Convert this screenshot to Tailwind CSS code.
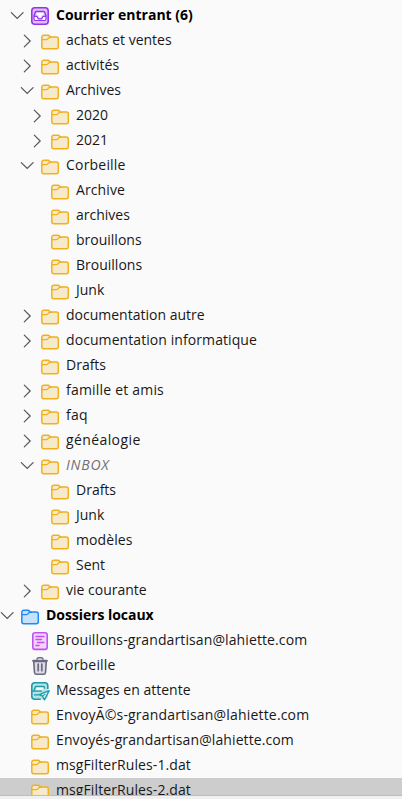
<!DOCTYPE html>
<html lang="fr">
<head>
  <meta charset="UTF-8" />
  <meta name="viewport" content="width=device-width, initial-scale=1" />
  <title>Dossiers</title>
  <script src="https://cdn.jsdelivr.net/npm/@tailwindcss/browser@4"></script>
</head>
<body class="bg-[#fafafa] h-screen overflow-hidden flex flex-col font-['Open_Sans',sans-serif] text-[14px] text-[#18181b]">

  <!-- icon sprite -->
  <svg class="hidden">
    <symbol id="open" viewBox="0 0 14 20"><path d="M1.3 6.6 7.2 12.5 13.1 6.6" fill="none" stroke="#55555c" stroke-width="1.2" stroke-linecap="round" /></symbol>
    <symbol id="closed" viewBox="0 0 14 20"><path d="M4.3 4.1 10.2 10 4.3 15.9" fill="none" stroke="#55555c" stroke-width="1.2" stroke-linecap="round" /></symbol>
    <symbol id="folder" viewBox="0 0 20 20">
      <path d="M1.8 6.2a2 2 0 0 1 2-2h4.1c.8 0 1.3.3 1.6.9l.5 1h6.3a2 2 0 0 1 2 2v7.6a2 2 0 0 1-2 2H3.8a2 2 0 0 1-2-2z" fill="#f7eacb" stroke="#f0b11e" stroke-width="1.5" />
      <path d="M2 8.6h4.6c1.8 0 1.6-2.3 3.4-2.3h2" fill="none" stroke="#f0b11e" stroke-width="1.3" />
    </symbol>
    <symbol id="local" viewBox="0 0 20 20">
      <path d="M1.8 6.2a2 2 0 0 1 2-2h4.1c.8 0 1.3.3 1.6.9l.5 1h6.3a2 2 0 0 1 2 2v7.6a2 2 0 0 1-2 2H3.8a2 2 0 0 1-2-2z" fill="#c5e2fb" stroke="#2288f5" stroke-width="1.5" />
      <path d="M2 8.6h4.6c1.8 0 1.6-2.3 3.4-2.3h2" fill="none" stroke="#2288f5" stroke-width="1.3" />
    </symbol>
    <symbol id="inbox" viewBox="0 0 20 20">
      <rect x="1.8" y="1.8" width="16.4" height="16.4" rx="3" fill="#dcc0fb" stroke="#9333ea" stroke-width="1.6" />
      <path d="M4 10.3h2.7c.9 0 .8 2.6 2 2.6h2.6c1.2 0 1.1-2.6 2-2.6H16v2.8c0 .9-.6 1.4-1.4 1.4H5.4c-.8 0-1.4-.5-1.4-1.4z" fill="#fff" stroke="#9333ea" stroke-width="1.2" />
      <path d="M4 10.3 5.2 6.4c.2-.7.6-1 1.3-1h7c.7 0 1.1.3 1.3 1L16 10.3" fill="none" stroke="#9333ea" stroke-width="1.4" />
      <path d="M6.6 8.1h6.8M8.6 10.4h2.8" stroke="#fff" stroke-width="2.2" />
    </symbol>
    <symbol id="draft" viewBox="0 0 20 20">
      <rect x="2.8" y="1.8" width="14.4" height="16.6" rx="2.2" fill="#f2d4fd" stroke="#c252f0" stroke-width="1.6" />
      <path d="M6 5.5h8M6 8.5h5.5M7.5 11.5H14M6 14.5h3" stroke="#c252f0" stroke-width="1.4" stroke-linecap="round" />
    </symbol>
    <symbol id="trash" viewBox="0 0 20 20">
      <path d="M3.7 5.4h12.6l-.8 11.1c-.1 1.1-.9 1.8-2 1.8h-7c-1.1 0-1.9-.7-2-1.8z" fill="#dcdce6" stroke="#6a6a82" stroke-width="1.6" />
      <path d="M3.2 4.8h13.6" stroke="#6a6a82" stroke-width="2.2" stroke-linecap="round" />
      <path d="M7 3.8c0-1.3.6-2 1.7-2h2.6c1.1 0 1.7.7 1.7 2" fill="none" stroke="#6a6a82" stroke-width="1.4" />
      <path d="M8.2 8.2v6.5M11.8 8.2v6.5" stroke="#6a6a82" stroke-width="1.7" stroke-linecap="round" />
    </symbol>
    <symbol id="outbox" viewBox="0 0 20 20">
      <rect x="1.8" y="1.8" width="16" height="16.4" rx="3" fill="#b4e2e7" />
      <path d="M17.8 8V4.8a3 3 0 0 0-3-3h-10a3 3 0 0 0-3 3v10.4a3 3 0 0 0 3 3h6" fill="none" stroke="#1d99a8" stroke-width="1.6" />
      <path d="M2 10.2h10M4 9.8l1.2-3.6c.2-.6.6-.9 1.2-.9h6.8c.6 0 1 .3 1.2.9l.4 1.5M4 13.8h5.4" fill="none" stroke="#1d99a8" stroke-width="1.3" />
      <path d="M6.5 7.8h6.4" stroke="#fff" stroke-width="1.8" />
      <path d="M19.2 9.6 9.4 13.6l3.2 1.6 1.8 3.7z" fill="#e4f6f8" stroke="#1d99a8" stroke-width="1.3" stroke-linejoin="round" />
      <path d="m12.6 15.2 2.8-2.4" stroke="#1d99a8" stroke-width="1.1" />
    </symbol>
  </svg>

  <ul id="tree" class="h-[795px] shrink-0 overflow-hidden pt-[3px]"></ul>
  <div class="grow bg-[#f0f0f0] border-t border-[#bdbdbd]"></div>

  <script>
    // [depth, arrow, icon, label, extra classes]
    const rows = [
      [1, "open", "inbox", "Courrier entrant (6)", "font-bold text-black"],
      [2, "closed", "folder", "achats et ventes"],
      [2, "closed", "folder", "activités"],
      [2, "open", "folder", "Archives"],
      [3, "closed", "folder", "2020"],
      [3, "closed", "folder", "2021"],
      [2, "open", "folder", "Corbeille", "tracking-[0.2px]"],
      [3, "", "folder", "Archive", "tracking-[0.1px]"],
      [3, "", "folder", "archives"],
      [3, "", "folder", "brouillons"],
      [3, "", "folder", "Brouillons"],
      [3, "", "folder", "Junk"],
      [2, "closed", "folder", "documentation autre"],
      [2, "closed", "folder", "documentation informatique", "tracking-[0.08px]"],
      [2, "", "folder", "Drafts"],
      [2, "closed", "folder", "famille et amis", "tracking-[0.2px]"],
      [2, "closed", "folder", "faq", "tracking-[0.2px]"],
      [2, "closed", "folder", "généalogie", "tracking-[0.4px]"],
      [2, "open", "folder", "INBOX", "italic text-[#6f6f73] tracking-[0.8px]"],
      [3, "", "folder", "Drafts"],
      [3, "", "folder", "Junk"],
      [3, "", "folder", "modèles", "tracking-[0.1px]"],
      [3, "", "folder", "Sent"],
      [2, "closed", "folder", "vie courante"],
      [0, "open", "local", "Dossiers locaux", "font-bold text-black tracking-[-0.05px]"],
      [1, "", "draft", "Brouillons-grandartisan@lahiette.com", "tracking-[0.11px]"],
      [1, "", "trash", "Corbeille", "tracking-[0.2px]"],
      [1, "", "outbox", "Messages en attente"],
      [1, "", "folder", "EnvoyÃ©s-grandartisan@lahiette.com", "tracking-[0.18px]"],
      [1, "", "folder", "Envoyés-grandartisan@lahiette.com", "tracking-[0.1px]"],
      [1, "", "folder", "msgFilterRules-1.dat", "tracking-[0.1px]"],
      [1, "", "folder", "msgFilterRules-2.dat", "tracking-[0.1px]", true],
    ];
    const indent = ["pl-0", "pl-[10px]", "pl-[20px]", "pl-[30px]"];

    document.getElementById("tree").innerHTML = rows.map(([depth, arrow, icon, label, extra, selected]) => `
      <li class="flex items-center gap-1.5 h-[25px] ${indent[depth]} ${selected ? "bg-[#cdcdcd]" : ""}">
        <svg class="w-[14px] h-5 shrink-0">${arrow ? `<use href="#${arrow}" />` : ""}</svg>
        <svg class="size-5 shrink-0"><use href="#${icon}" /></svg>
        <span class="whitespace-nowrap leading-[23px] pb-0.5 ${extra || ""}">${label}</span>
      </li>`).join("");
  </script>
</body>
</html>
